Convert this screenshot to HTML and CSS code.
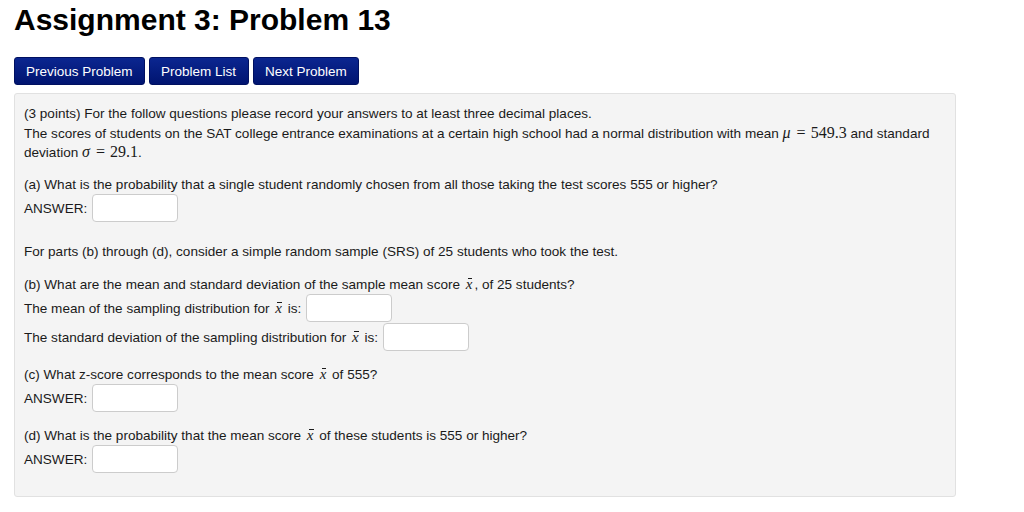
FILE: index.html
```html
<!DOCTYPE html>
<html>
<head>
<meta charset="utf-8">
<link rel="stylesheet" href="styles.css">
</head>
<body>
<h1 class="title">Assignment 3: Problem 13</h1>
<div class="nav">
  <a class="btn first">Previous Problem</a>
  <a class="btn">Problem List</a>
  <a class="btn">Next Problem</a>
</div>
<div class="problem">
  <div class="line">(3 points) For the follow questions please record your answers to at least three decimal places.</div>
  <div class="line">The scores of students on the SAT college entrance examinations at a certain high school had a normal distribution with mean <span class="m"><i>μ</i><span class="eq">=</span>549.3</span> and standard</div>
  <div class="line">deviation <span class="m"><i>σ</i><span class="eq">=</span>29.1</span>.</div>

  <div class="line gap">(a) What is the probability that a single student randomly chosen from all those taking the test scores 555 or higher?</div>
  <div class="row">ANSWER: <span class="inp"></span></div>

  <div class="line gap2">For parts (b) through (d), consider a simple random sample (SRS) of 25 students who took the test.</div>

  <div class="line gap">(b) What are the mean and standard deviation of the sample mean score <span class="xb">x</span>, of 25 students?</div>
  <div class="row">The mean of the sampling distribution for <span class="xb">x</span> is: <span class="inp"></span></div>
  <div class="row r2">The standard deviation of the sampling distribution for <span class="xb">x</span> is: <span class="inp"></span></div>

  <div class="line gap">(c) What z-score corresponds to the mean score <span class="xb">x</span> of 555?</div>
  <div class="row">ANSWER: <span class="inp"></span></div>

  <div class="line gap">(d) What is the probability that the mean score <span class="xb">x</span> of these students is 555 or higher?</div>
  <div class="row">ANSWER: <span class="inp"></span></div>
</div>
</body>
</html>
```
FILE: styles.css
```css
html, body {
  margin: 0;
  padding: 0;
  background: #ffffff;
}
body {
  font-family: "Liberation Sans", Arial, sans-serif;
  color: #1a1a1a;
  padding: 0 14px;
}
.title {
  margin: 0;
  padding-top: 3px;
  font-size: 30px;
  line-height: 34px;
  font-weight: bold;
  color: #000;
}
.nav {
  display: flex;
  gap: 4px;
  margin-top: 20px;
}
.btn {
  display: flex;
  align-items: center;
  height: 28px;
  box-sizing: border-box;
  padding: 0 11.5px;
  font-size: 13.5px;
  color: #fff;
  background: linear-gradient(#0b2690, #001470);
  border: 1px solid #001060;
  border-radius: 3px;
}
.btn.first { padding: 0 11px; }
.problem {
  margin-top: 8px;
  width: 942px;
  box-sizing: border-box;
  background: #f4f4f4;
  border: 1px solid #e1e1e1;
  border-radius: 3px;
  padding: 10px 9px 23px 9px;
  font-size: 13.55px;
  color: #1a1a1a;
}
.line {
  line-height: 19px;
  height: 19px;
  white-space: nowrap;
}
.gap { margin-top: 14px; }
.gap2 { margin-top: 20px; }
.row {
  display: flex;
  align-items: center;
  height: 28px;
  white-space: pre;
}
.r2 { margin-top: 1px; }
.inp {
  display: inline-block;
  width: 86px;
  height: 28px;
  box-sizing: border-box;
  margin-left: 1px;
  background: #fff;
  border: 1px solid #cccccc;
  border-radius: 4px;
}
.m {
  font-family: "Liberation Serif", "Times New Roman", serif;
  font-size: 16px;
}
.m i { font-style: italic; }
.eq { margin: 0 5px 0 6px; }
.xb {
  position: relative;
  margin: 0 2px;
  font-family: "Liberation Serif", "Times New Roman", serif;
  font-style: italic;
  font-size: 15px;
}
.xb::after {
  content: "";
  position: absolute;
  left: 2px;
  right: 0;
  top: 2px;
  height: 1px;
  background: #1a1a1a;
}
```
